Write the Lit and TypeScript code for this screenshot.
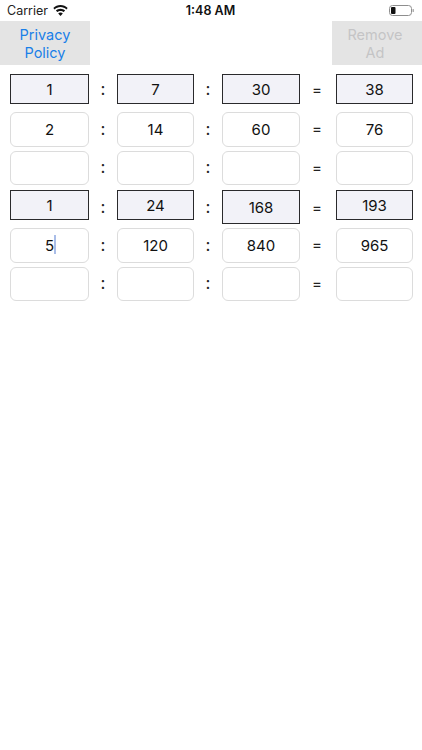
import { LitElement, html, css, nothing } from "lit";
import { customElement } from "lit/decorators.js";

type Row = { vals: string[]; marked: boolean; cls: string; caret?: boolean };

const rows: Row[] = [
  { vals: ["1", "7", "30", "38"], marked: true, cls: "g8" },
  { vals: ["2", "14", "60", "76"], marked: false, cls: "g4" },
  { vals: ["", "", "", ""], marked: false, cls: "g5 short" },
  { vals: ["1", "24", "168", "193"], marked: true, cls: "g8 tallthird" },
  { vals: ["5", "120", "840", "965"], marked: false, cls: "g4", caret: true },
  { vals: ["", "", "", ""], marked: false, cls: "short" },
];

@customElement("app-root")
export class AppRoot extends LitElement {
  static styles = css`
    :host {
      display: block;
      width: 422px;
      height: 750px;
      background: #fff;
      overflow: hidden;
      font-family: Inter, "Liberation Sans", sans-serif;
      color: #111;
    }
    .status {
      height: 21px;
      display: grid;
      grid-template-columns: 1fr auto 1fr;
      align-items: center;
      padding: 0 8px 0 7px;
      font-size: 12.5px;
    }
    .left { display: flex; align-items: center; gap: 5px; color: #222; }
    .time { font-weight: 600; font-size: 12.5px; }
    .right { display: flex; justify-content: flex-end; align-items: center; }
    .actions {
      display: flex;
      justify-content: space-between;
      height: 44px;
      margin-bottom: 9px;
    }
    .btn {
      width: 90px;
      box-sizing: border-box;
      padding-top: 2px;
      background: #e4e4e4;
      font-size: 14.5px;
      line-height: 18px;
      text-align: center;
      display: flex;
      align-items: center;
      justify-content: center;
      color: #1a7fe8;
    }
    .btn.off { color: #c4c4c6; padding-right: 4px; }
    .btn span { width: 66px; }
    .row {
      display: grid;
      grid-template-columns: 79px 28px 77px 28px 78px 36px 77px;
      padding-left: 10px;
      height: 35px;
    }
    .row.short { height: 34px; }
    .row.marked { height: 30px; }
    .row.g8 { margin-bottom: 8px; }
    .row.g4 { margin-bottom: 4px; }
    .row.g5 { margin-bottom: 5px; }
    .box {
      box-sizing: border-box;
      border: 1.5px solid #dcdcdc;
      border-radius: 6px;
      display: flex;
      align-items: center;
      justify-content: center;
      font-size: 15px;
      color: #111;
      background: #fff;
      height: 100%;
    }
    .marked .box {
      border: 1.5px solid #2a2a2c;
      border-radius: 0;
      background: #f2f2f8;
      height: 30px;
    }
    .tallthird .box.third { height: 34px; }
    .sep {
      display: flex;
      align-items: center;
      justify-content: center;
      box-sizing: border-box;
      padding-bottom: 2px;
      font-size: 17px;
      font-weight: 400;
      height: 100%;
      color: #222;
    }
    .marked .sep { padding-bottom: 0; }
    .sep.eq { font-size: 15px; padding-right: 2px; }
    .caret-wrap { position: relative; }
    .caret {
      position: absolute;
      left: calc(100% - 0.5px);
      top: -1px;
      width: 2px;
      height: 19px;
      background: #a9bde8;
    }
  `;

  render() {
    return html`
      <div class="status">
        <div class="left">
          <span>Carrier</span>
          <svg width="15" height="11" viewBox="0 0 15 11" aria-hidden="true">
            <path d="M7.5 0C4.7 0 2.2 1.1.3 2.9l1.4 1.5C3.2 3 5.2 2.1 7.5 2.1s4.3.9 5.8 2.3l1.4-1.5C12.8 1.1 10.3 0 7.5 0z" fill="#111"/>
            <path d="M7.5 3.8c-1.8 0-3.4.7-4.6 1.8l1.4 1.5c.8-.8 2-1.2 3.2-1.2s2.4.4 3.2 1.2l1.4-1.5C10.9 4.5 9.3 3.8 7.5 3.8z" fill="#111"/>
            <path d="M7.5 7.6c-.9 0-1.7.3-2.3.9l2.3 2.5 2.3-2.5c-.6-.6-1.4-.9-2.3-.9z" fill="#111"/>
          </svg>
        </div>
        <div class="time">1:48 AM</div>
        <div class="right">
          <svg width="25" height="11" viewBox="0 0 25 11" aria-hidden="true">
            <rect x=".5" y=".5" width="22" height="10" rx="3" fill="none" stroke="#8e8e8e"/>
            <rect x="2" y="2" width="4.5" height="7" rx="1" fill="#111"/>
            <rect x="23.6" y="4" width="1.2" height="3" rx=".6" fill="#999"/>
          </svg>
        </div>
      </div>
      <div class="actions">
        <div class="btn"><span>Privacy Policy</span></div>
        <div class="btn off"><span>Remove Ad</span></div>
      </div>
      ${rows.map(
        (r) => html`
          <div class="row ${r.marked ? "marked" : ""} ${r.cls}">
            <div class="box">
              <span class="caret-wrap">${r.vals[0]}${r.caret ? html`<i class="caret"></i>` : nothing}</span>
            </div>
            <div class="sep">:</div>
            <div class="box">${r.vals[1]}</div>
            <div class="sep">:</div>
            <div class="box third">${r.vals[2]}</div>
            <div class="sep eq">=</div>
            <div class="box">${r.vals[3]}</div>
          </div>
        `
      )}
    `;
  }
}
